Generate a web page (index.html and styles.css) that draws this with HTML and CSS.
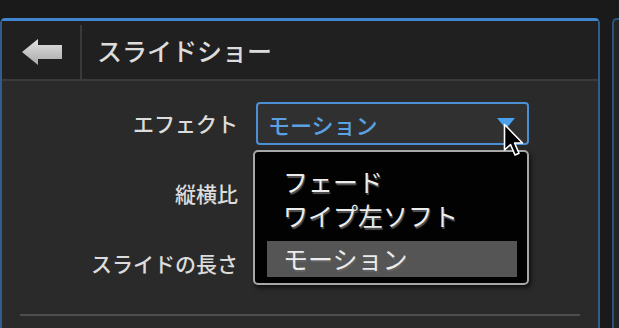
FILE: index.html
```html
<!DOCTYPE html>
<html lang="ja">
<head>
<meta charset="utf-8">
<link rel="stylesheet" href="styles.css">
</head>
<body>
<div class="screen">
  <section class="panel">
    <header class="head">
      <button class="back" aria-label="戻る">
        <svg width="42" height="28" viewBox="0 0 42 28">
          <defs>
            <linearGradient id="ag" x1="0" y1="0" x2="0" y2="1">
              <stop offset="0" stop-color="#e2e2e2"/>
              <stop offset="1" stop-color="#a9a9a9"/>
            </linearGradient>
          </defs>
          <path d="M1 14 L17 1 L17 7 L41 7 L41 21 L17 21 L17 27 Z" fill="url(#ag)"/>
        </svg>
      </button>
      <h1 class="title">スライドショー</h1>
    </header>
    <div class="body">
      <div class="form">
        <div class="label">エフェクト</div>
        <div class="select active">
          <span class="value">モーション</span>
          <span class="tri"></span>
          <svg class="cursor" width="22" height="36" viewBox="0 0 22 36">
            <path d="M1.5 1.5 L1.5 27 L7.5 21.5 L12 32 L16 30.2 L11.6 20 L19.5 20 Z" fill="#000" stroke="#fff" stroke-width="1.6" stroke-linejoin="round"/>
          </svg>
          <div class="popup">
            <div class="opt">フェード</div>
            <div class="opt">ワイプ左ソフト</div>
            <div class="opt sel">モーション</div>
          </div>
        </div>
        <div class="label">縦横比</div>
        <div class="select">
          <span class="value">16:9</span>
          <span class="tri dim"></span>
        </div>
        <div class="label">スライドの長さ</div>
        <div class="select">
          <span class="value"></span>
        </div>
      </div>
      <hr class="rule">
    </div>
  </section>
  <section class="panel stub"></section>
</div>
</body>
</html>
```
FILE: styles.css
```css
* { box-sizing: border-box; }
html, body { margin: 0; padding: 0; }
body {
  background: #1a1a1a;
  font-family: "Noto Sans CJK JP", "Noto Sans", sans-serif;
  color: #dedede;
  width: 619px;
  height: 328px;
  overflow: hidden;
}
.screen {
  display: flex;
  gap: 12px;
  padding-top: 18px;
  height: 328px;
  width: 619px;
  overflow: hidden;
}
.panel {
  flex: 0 0 600px;
  border: 2px solid #2f5d8c;
  border-top: 3px solid #3f85cf;
  border-bottom: none;
  border-radius: 5px 5px 0 0;
  background: #2a2a2a;
  display: flex;
  flex-direction: column;
}
.panel.stub {
  flex: 0 0 7px;
  border-color: #2c537c;
  border-top: 2px solid #2c537c;
  border-right: none;
  border-radius: 5px 0 0 0;
  background: #242424;
}
.head {
  height: 60px;
  background: #202020;
  border-bottom: 2px solid #3a3a3a;
  display: flex;
  align-items: stretch;
}
.back {
  width: 80px;
  background: none;
  border: none;
  border-right: 2px solid #3a3a3a;
  margin: 4px 0 0;
  padding: 0 0 0 2px;
  display: flex;
  align-items: center;
  justify-content: center;
}
.title {
  margin: 0;
  padding-left: 15px;
  font-size: 25px;
  font-weight: 500;
  line-height: 58px;
  color: #dcdcdc;
}
.body {
  padding: 21px 0 0;
  flex: 1;
}
.form {
  display: grid;
  grid-template-columns: 236px 273px;
  column-gap: 18px;
  row-gap: 27px;
  align-items: center;
}
.label {
  text-align: right;
  font-size: 21px;
  font-weight: 500;
  color: #dcdcdc;
  line-height: 43px;
}
.select {
  position: relative;
  height: 43px;
  border: 2px solid transparent;
  border-radius: 4px;
  display: flex;
  align-items: center;
  padding: 0 12px 0 10px;
}
.select.active {
  border-color: #4b8fd5;
  background: #303030;
}
.value {
  flex: 1;
  font-size: 22px;
  font-weight: 500;
  color: #5aa0e2;
}
.select:not(.active) .value { color: #3a3a3a; font-size: 18px; }
.tri {
  width: 0; height: 0;
  border-left: 9px solid transparent;
  border-right: 9px solid transparent;
  border-top: 11px solid #4aa0ea;
}
.tri.dim { border-top-color: #1c1c1c; }
.cursor {
  position: absolute;
  left: 245px;
  top: 19px;
  z-index: 3;
}
.popup {
  position: absolute;
  left: -5px;
  top: 46px;
  width: 276px;
  height: 135px;
  background: #020202;
  border: 2px solid #a8a8a8;
  border-radius: 5px;
  box-shadow: 2px 3px 4px rgba(0,0,0,0.6);
  padding: 12px 10px 0 12px;
  z-index: 2;
}
.opt {
  font-size: 25px;
  font-weight: 400;
  line-height: 34px;
  padding-left: 16px;
  color: #ececec;
  text-shadow: 1px 2px 1px rgba(100,100,100,0.85);
}
.opt.sel {
  background: #555555;
  margin-top: 9px;
  height: 36px;
  line-height: 34px;
}
.rule {
  margin: 29px 18px 0 18px;
  border: none;
  height: 2px;
  background: #4e4e4e;
}
```
